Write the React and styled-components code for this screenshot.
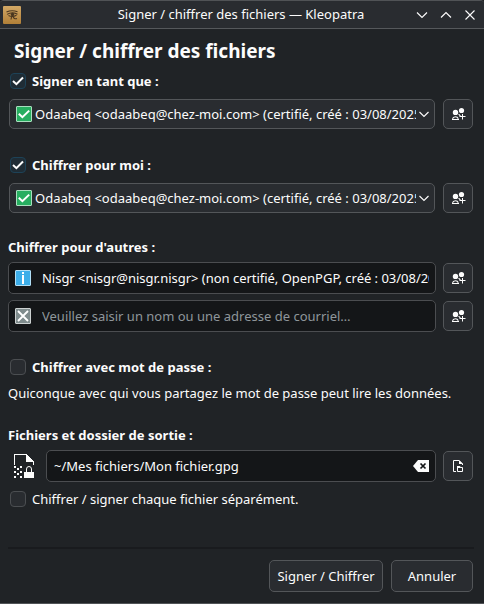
import React from "react";
import styled, { createGlobalStyle } from "styled-components";

const Global = createGlobalStyle`
  *, *::before, *::after { box-sizing: border-box; }
  body { margin: 0; background: #202326; font-family: "Noto Sans", sans-serif; font-size: 13px; color: #fcfcfc; }
  svg { display: block; flex: none; }
`;

const Window = styled.main`
  width: 484px;
  height: 604px;
  display: flex;
  flex-direction: column;
  background: #202326;
  border-top: 1px solid #505356;
  border-bottom: 1px solid #505356;
  border-radius: 4px 4px 0 0;
  overflow: hidden;
`;

const TitleBar = styled.header`
  height: 28px;
  flex: none;
  display: grid;
  grid-template-columns: 1fr auto 1fr;
  align-items: center;
  padding: 0 8px 0 3px;
  background: #292c30;
  border-bottom: 1px solid #55585b;
`;

const TitleText = styled.span`
  line-height: 20px;
  white-space: nowrap;
  margin-left: 3px;
  padding-bottom: 1px;
`;

const WindowControls = styled.div`
  display: flex;
  justify-content: flex-end;
  gap: 12px;
`;

const Content = styled.div`
  flex: 1;
  display: flex;
  flex-direction: column;
  padding: 0 10px 11px 8px;
`;

const Heading = styled.h1`
  margin: 0;
  height: 43px;
  padding-left: 6px;
  font-size: 19px;
  line-height: 45px;
  font-weight: 700;
  white-space: nowrap;
`;

const Label = styled.div`
  display: flex;
  align-items: center;
  gap: 6px;
  height: 18px;
  margin-top: ${(p) => p.$top || 0}px;
  padding-left: ${(p) => (p.$check ? 2 : 0)}px;
  font-weight: ${(p) => (p.$bold ? 700 : 400)};
  white-space: nowrap;
`;

const CheckBox = styled.span`
  width: 16px;
  height: 16px;
  flex: none;
  display: grid;
  place-items: center;
  border: 1px solid ${(p) => (p.$on ? "#1d4257" : "#4b4e51")};
  border-radius: 4px;
  background: ${(p) => (p.$on ? "#1f2c35" : "#292c30")};
`;

const Row = styled.div`
  display: flex;
  align-items: center;
  height: ${(p) => p.$height || 32}px;
  margin-top: ${(p) => p.$top || 0}px;
  padding-right: 1px;
`;

const Combo = styled.div`
  width: 426px;
  height: 30px;
  margin: 0 8px 0 1px;
  display: flex;
  align-items: center;
  gap: 2px;
  padding: 0 4px 0 6px;
  border: 1px solid #535659;
  border-radius: 5px;
  background: #292c30;
`;

const Field = styled.div`
  flex: 1;
  min-width: 0;
  height: 32px;
  margin-right: 7px;
  display: flex;
  align-items: center;
  padding: 0 6px;
  border: 1px solid #4b4d50;
  border-radius: 5px;
  background: #141618;
  color: ${(p) => (p.$muted ? "#8f969b" : "#fcfcfc")};
`;

const ClippedText = styled.span`
  flex: 1;
  min-width: 0;
  margin-left: ${(p) => p.$left}px;
  overflow: hidden;
  white-space: nowrap;
  letter-spacing: ${(p) => (p.$tight ? "-0.025px" : "normal")};
`;

const Button = styled.button`
  width: ${(p) => p.$width || 30}px;
  height: ${(p) => p.$height || 30}px;
  flex: none;
  display: grid;
  place-items: center;
  padding: 0;
  border: 1px solid #535659;
  border-radius: 5px;
  background: #292c30;
  color: #fcfcfc;
  font: inherit;
  white-space: nowrap;
`;

const Note = styled.p`
  margin: 7px 0 0;
  height: 21px;
  line-height: 20px;
  white-space: nowrap;
`;

const OutputIcon = styled.div`
  width: 38px;
  padding-left: 5px;
  flex: none;
`;

const Footer = styled.footer`
  margin-top: auto;
  display: flex;
  justify-content: flex-end;
  gap: 8px;
  padding: 11px 1px 0 0;
  border-top: 2px solid #191b1e;
`;

const KleopatraIcon = () => (
  <svg width="18" height="18" viewBox="0 0 18 18">
    <defs>
      <linearGradient id="papyrus" x1="0" y1="0" x2="0" y2="1">
        <stop offset="0" stopColor="#d2a866" />
        <stop offset="1" stopColor="#b28038" />
      </linearGradient>
    </defs>
    <rect width="18" height="18" rx="1" fill="url(#papyrus)" />
    <g fill="none" stroke="#4b3721" strokeWidth="1.1">
      <path d="M3.5 6Q9 3.6 14.5 5.8" />
      <path d="M4 8.4Q9 5.4 14.5 8.2M5.5 9.4Q9.5 11.4 13.5 9.2" />
      <path d="M8.6 10.5L8 13.5M10 10.5Q11 13.6 14 12.5" />
    </g>
    <circle cx="9.5" cy="8.5" r="1.7" fill="#49361f" />
  </svg>
);

const Check = () => (
  <svg width="12" height="10" viewBox="0 0 12 10">
    <path d="M1 5L4.4 8.2L11 1.5" fill="none" stroke="#fcfcfc" strokeWidth="2" />
  </svg>
);

const Chevron = ({ up }) => (
  <svg width="12" height="12" viewBox="0 0 12 12">
    <path d={up ? "M1 8.5L6 3.5L11 8.5" : "M1 3.5L6 8.5L11 3.5"} fill="none" stroke="#fcfcfc" strokeWidth="1.15" />
  </svg>
);

const ComboArrow = () => (
  <svg width="12" height="12" viewBox="0 0 12 12">
    <path d="M1.5 4L6 8.5L10.5 4" fill="none" stroke="#fcfcfc" strokeWidth="1.15" />
  </svg>
);

const Close = () => (
  <svg width="12" height="12" viewBox="0 0 12 12">
    <path d="M1.5 1.5L10.5 10.5M10.5 1.5L1.5 10.5" fill="none" stroke="#fcfcfc" strokeWidth="1.1" />
  </svg>
);

const STATUS = {
  valid: { fill: "#27ae60", edge: "#a9dfbf" },
  info: { fill: "#3daee9", edge: "#b1dff6" },
  none: { fill: "#7f8c8d", edge: "#ccd1d1" },
};

const StatusIcon = ({ kind }) => (
  <svg width="16" height="16" viewBox="0 0 16 16">
    <rect x=".5" y=".5" width="15" height="15" rx=".5" fill={STATUS[kind].fill} stroke={STATUS[kind].edge} />
    {kind === "valid" && <path d="M2.8 7.8L6.4 11.2L13.2 4.6" fill="none" stroke="#fff" strokeWidth="2" />}
    {kind === "info" && <path d="M7 2h2v2H7zM7 5h2v9H7z" fill="#fff" />}
    {kind === "none" && <path d="M3 3L13 13M13 3L3 13" fill="none" stroke="#fff" strokeWidth="1.8" />}
  </svg>
);

const AddUsers = () => (
  <svg width="16" height="16" viewBox="0 0 16 16">
    <g fill="#fcfcfc">
      <circle cx="5.5" cy="6.4" r="2.7" />
      <circle cx="11.5" cy="4.5" r="2.6" />
      <path d="M12 8h1v2h2.5v1H13v2.5h-1V11H9.5v-1H12z" />
    </g>
    <path d="M2.5 12.8Q3 10.7 5.5 10.7Q7.5 10.7 8.3 12.8M2 13.5h7M8.6 8.2L10.4 10" fill="none" stroke="#fcfcfc" strokeWidth="1.1" />
  </svg>
);

const EncryptedFile = () => (
  <svg width="22" height="26" viewBox="0 0 22 26" shapeRendering="crispEdges">
    <path d="M1 1h12v1H2v10H1z" fill="#fcfcfc" />
    <path d="M13 1L21 9H13z" fill="#fcfcfc" />
    <path d="M20 8h1v4h-1z" fill="#fcfcfc" />
    <path d="M1 13h2v2H1zM7 13h2v2H7zM4 15h2v2H4zM1 18h2v2H1zM7 18h2v2H7zM4 20h2v2H4zM1 23h2v2H1zM7 23h2v2H7z" fill="#fcfcfc" />
    <rect x="11" y="19" width="10" height="6" fill="#fcfcfc" />
    <path d="M13.5 19v-3q0-2.5 2.5-2.5t2.5 2.5v3" fill="none" stroke="#fcfcfc" shapeRendering="auto" />
  </svg>
);

const ClearIcon = () => (
  <svg width="16" height="12" viewBox="0 0 16 12">
    <path d="M0 6L5 0h11v12H5z" fill="#fcfcfc" />
    <path d="M7.5 3.5L12.5 8.5M12.5 3.5L7.5 8.5" stroke="#141618" strokeWidth="1.7" />
  </svg>
);

const OpenDocument = () => (
  <svg width="16" height="16" viewBox="0 0 16 16">
    <path d="M6 13.5H3.5v-11H9L12.5 6v1" fill="none" stroke="#fcfcfc" />
    <path d="M9 2L13 6H9z" fill="#fcfcfc" />
    <path d="M7.5 13.5v-5h2l1 1h2v4z" fill="none" stroke="#fcfcfc" />
    <path d="M7 8h3l1 2H7z" fill="#fcfcfc" />
  </svg>
);

const KeySelect = () => (
  <Row $height={30} $top={9}>
    <Combo>
      <StatusIcon kind="valid" />
      <ClippedText $left={1}>{"Odaabeq <odaabeq@chez-moi.com> (certifié, créé : 03/08/2025)"}</ClippedText>
      <ComboArrow />
    </Combo>
    <Button aria-label="Choisir un certificat"><AddUsers /></Button>
  </Row>
);

const Option = ({ checked, bold, top, children }) => (
  <Label $check $bold={bold} $top={top}>
    <CheckBox $on={checked}>{checked && <Check />}</CheckBox>
    {children}
  </Label>
);

export default function App() {
  return (
    <>
      <Global />
      <Window>
        <TitleBar>
          <KleopatraIcon />
          <TitleText>Signer / chiffrer des fichiers — Kleopatra</TitleText>
          <WindowControls><Chevron /><Chevron up /><Close /></WindowControls>
        </TitleBar>
        <Content>
          <Heading>Signer / chiffrer des fichiers</Heading>
          <Option checked bold>Signer en tant que :</Option>
          <KeySelect />
          <Option checked bold top={27}>Chiffrer pour moi :</Option>
          <KeySelect />
          <Label $bold $top={25}>Chiffrer pour d'autres :</Label>
          <Row $top={6}>
            <Field>
              <StatusIcon kind="info" />
              <ClippedText $left={11} $tight>{"Nisgr <nisgr@nisgr.nisgr> (non certifié, OpenPGP, créé : 03/08/2025)"}</ClippedText>
            </Field>
            <Button aria-label="Choisir un certificat"><AddUsers /></Button>
          </Row>
          <Row $top={6}>
            <Field $muted>
              <StatusIcon kind="none" />
              <ClippedText $left={11}>Veuillez saisir un nom ou une adresse de courriel…</ClippedText>
            </Field>
            <Button aria-label="Choisir un certificat"><AddUsers /></Button>
          </Row>
          <Option bold top={26}>Chiffrer avec mot de passe :</Option>
          <Note>Quiconque avec qui vous partagez le mot de passe peut lire les données.</Note>
          <Label $bold $top={22}>Fichiers et dossier de sortie :</Label>
          <Row $top={6}>
            <OutputIcon><EncryptedFile /></OutputIcon>
            <Field>
              <ClippedText $left={1}>~/Mes fichiers/Mon fichier.gpg</ClippedText>
              <ClearIcon />
            </Field>
            <Button aria-label="Choisir un fichier"><OpenDocument /></Button>
          </Row>
          <Option top={8}>Chiffrer / signer chaque fichier séparément.</Option>
          <Footer>
            <Button $width={114} $height={32}>Signer / Chiffrer</Button>
            <Button $width={82} $height={32}>Annuler</Button>
          </Footer>
        </Content>
      </Window>
    </>
  );
}
